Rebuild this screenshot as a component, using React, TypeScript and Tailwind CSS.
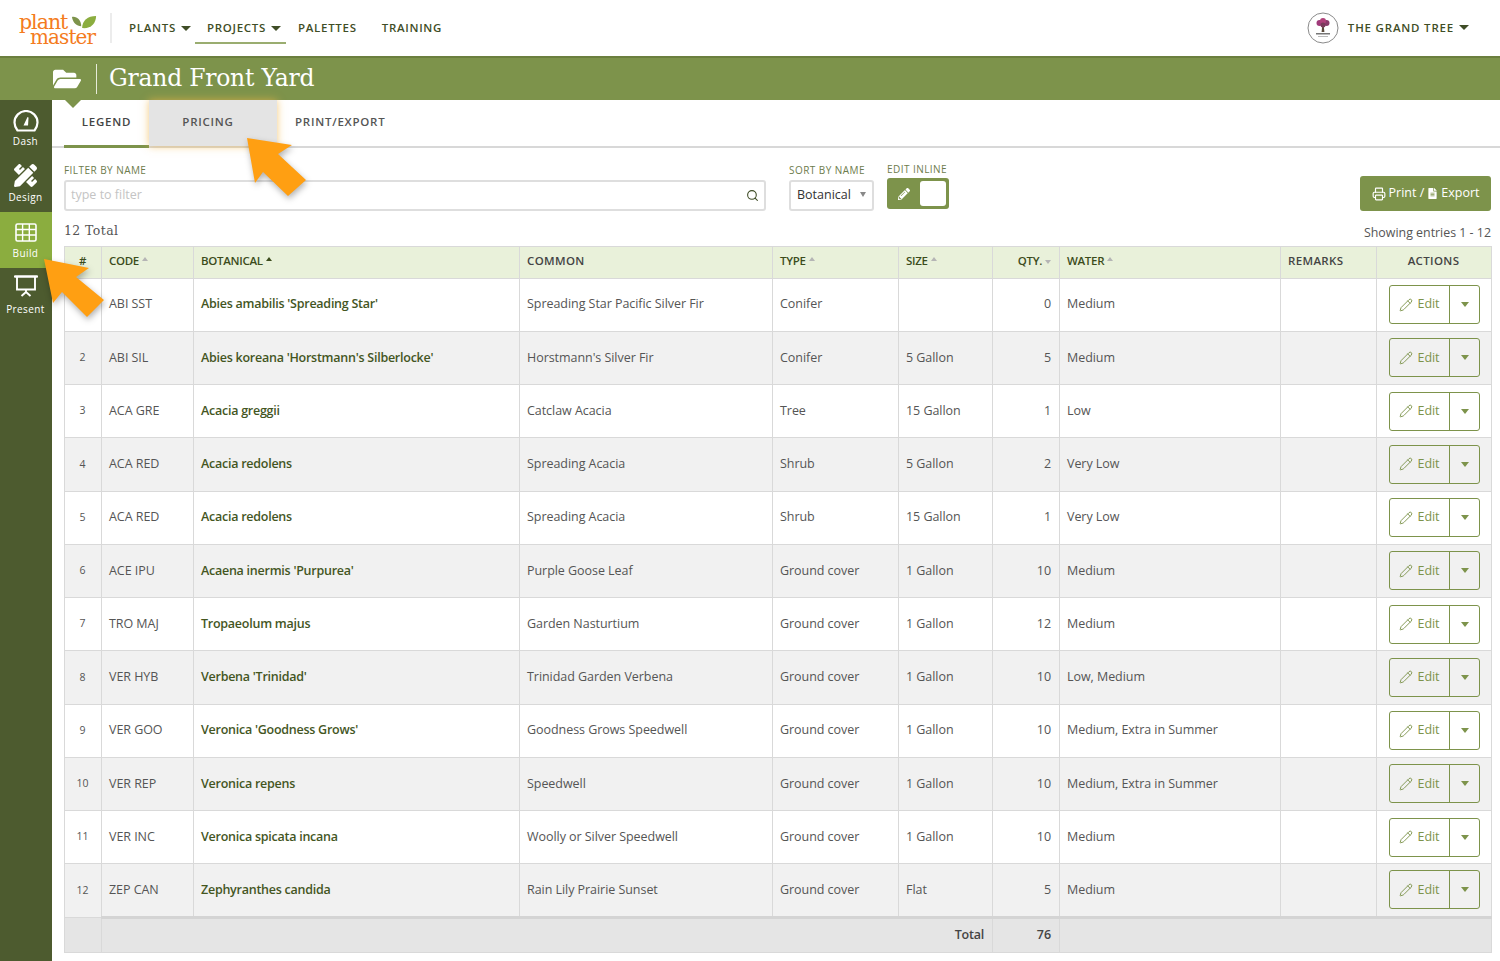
import React from 'react';
import { Search, Pencil, Printer } from 'lucide-react';
import { FaFolderOpen, FaPencilAlt, FaPencilRuler, FaFileAlt } from 'react-icons/fa';

type Row = { code: string; botanical: string; common: string; type: string; size: string; qty: number; water: string };

const rows: Row[] = [
  { code: 'ABI SST', botanical: "Abies amabilis 'Spreading Star'", common: 'Spreading Star Pacific Silver Fir', type: 'Conifer', size: '', qty: 0, water: 'Medium' },
  { code: 'ABI SIL', botanical: "Abies koreana 'Horstmann's Silberlocke'", common: "Horstmann's Silver Fir", type: 'Conifer', size: '5 Gallon', qty: 5, water: 'Medium' },
  { code: 'ACA GRE', botanical: 'Acacia greggii', common: 'Catclaw Acacia', type: 'Tree', size: '15 Gallon', qty: 1, water: 'Low' },
  { code: 'ACA RED', botanical: 'Acacia redolens', common: 'Spreading Acacia', type: 'Shrub', size: '5 Gallon', qty: 2, water: 'Very Low' },
  { code: 'ACA RED', botanical: 'Acacia redolens', common: 'Spreading Acacia', type: 'Shrub', size: '15 Gallon', qty: 1, water: 'Very Low' },
  { code: 'ACE IPU', botanical: "Acaena inermis 'Purpurea'", common: 'Purple Goose Leaf', type: 'Ground cover', size: '1 Gallon', qty: 10, water: 'Medium' },
  { code: 'TRO MAJ', botanical: 'Tropaeolum majus', common: 'Garden Nasturtium', type: 'Ground cover', size: '1 Gallon', qty: 12, water: 'Medium' },
  { code: 'VER HYB', botanical: "Verbena 'Trinidad'", common: 'Trinidad Garden Verbena', type: 'Ground cover', size: '1 Gallon', qty: 10, water: 'Low, Medium' },
  { code: 'VER GOO', botanical: "Veronica 'Goodness Grows'", common: 'Goodness Grows Speedwell', type: 'Ground cover', size: '1 Gallon', qty: 10, water: 'Medium, Extra in Summer' },
  { code: 'VER REP', botanical: 'Veronica repens', common: 'Speedwell', type: 'Ground cover', size: '1 Gallon', qty: 10, water: 'Medium, Extra in Summer' },
  { code: 'VER INC', botanical: 'Veronica spicata incana', common: 'Woolly or Silver Speedwell', type: 'Ground cover', size: '1 Gallon', qty: 10, water: 'Medium' },
  { code: 'ZEP CAN', botanical: 'Zephyranthes candida', common: 'Rain Lily Prairie Sunset', type: 'Ground cover', size: 'Flat', qty: 5, water: 'Medium' },
];

const Caret = ({ className = '' }: { className?: string }) => (
  <span className={`inline-block w-0 h-0 border-x-[5px] border-x-transparent border-t-[5px] border-t-[#3f4d26] ${className}`} />
);

const SortUp = ({ dark = false }: { dark?: boolean }) => (
  <span className={`inline-block align-[4px] ml-[3px] w-0 h-0 border-x-[3.5px] border-x-transparent border-b-[4px] ${dark ? 'border-b-[#3c4c1c]' : 'border-b-[#b5b5b5]'}`} />
);

const DashIcon = () => (
  <svg width="26" height="22" viewBox="0 0 26 22" fill="none" className="translate-y-[2px]">
    <path d="M4.5 20.5 H21.5 Q24.5 16.5 24.5 12.5 A 11.5 11.5 0 0 0 1.5 12.5 Q1.5 16.5 4.5 20.5 Z" stroke="white" strokeWidth="2.2" strokeLinejoin="round" />
    <path d="M10.5 15.5 L14.5 7 L15.5 7.5 L15 15.5 Z" fill="white" />
  </svg>
);

const BuildIcon = () => (
  <svg width="22" height="19" viewBox="0 0 22 19" fill="none" className="translate-y-[1px]">
    <rect x="1" y="1" width="20" height="17" rx="1.5" stroke="white" strokeWidth="1.6" />
    <path d="M1 6.5H21M1 12H21M7.6 1V18M14.3 1V18" stroke="white" strokeWidth="1.4" />
  </svg>
);

const PresentIcon = () => (
  <svg width="24" height="22" viewBox="0 0 24 22" fill="none" stroke="white" className="-translate-y-[1px]">
    <path d="M1 1.5H23" strokeWidth="2.4" strokeLinecap="round" />
    <path d="M3 2V14.5H21V2" strokeWidth="1.9" />
    <path d="M12 14.5V18M12 17L7.5 21M12 17L16.5 21" strokeWidth="1.9" />
  </svg>
);

const SideItem = ({ label, icon, active }: { label: string; icon: React.ReactNode; active?: boolean }) => (
  <div className={`h-14 flex flex-col items-center justify-end pr-[1px] pb-[9px] gap-[5px] ${active ? 'bg-[#8bad3f]' : ''}`}>
    <div className="h-[24px] flex items-center justify-center">{icon}</div>
    <div className="text-[10px] leading-[11px] tracking-[0.4px] text-white">{label}</div>
  </div>
);

// sortable headers are set tighter and darker than the plain ones
const Th = ({ children, className = '', plain }: { children: React.ReactNode; className?: string; plain?: boolean }) => (
  <th className={`border border-[#d9d9d9] pl-[7px] pr-2 pb-[4px] font-semibold ${plain ? 'text-[11.5px] text-[#444] tracking-[0.35px]' : 'text-[11.5px] text-[#3c4c1c] tracking-[-0.3px]'} ${className}`}>{children}</th>
);

const Td = ({ children, className = '' }: { children?: React.ReactNode; className?: string }) => (
  <td className={`border border-[#d9d9d9] pl-[7px] pr-2 ${className}`}>{children}</td>
);

const Arrow = ({ className, points }: { className: string; points: string }) => (
  <svg className={`absolute top-0 left-0 pointer-events-none ${className}`} width="1500" height="961">
    <polygon points={points} fill="#ff9f12" />
  </svg>
);

export default function App() {
  return (
    <div className="relative w-[1500px] h-[961px] overflow-hidden bg-white font-['Open_Sans',sans-serif] text-[#555]">
      {/* top nav */}
      <header className="h-14 flex items-center pl-[19px] pr-[31px]">
        <div className="w-[78px] h-[34px] relative font-['DejaVu_Serif',serif] text-[#f47b20] -translate-y-[1px]">
          <div className="absolute left-0 top-[5px] text-[20.5px] leading-[15px] tracking-[-1px]">plant</div>
          <div className="absolute left-[11px] top-[20px] text-[20px] leading-[15px] tracking-[-0.9px]">master</div>
          <svg className="absolute left-[52px] top-[5px]" width="26" height="15" viewBox="0 0 28 16">
            <path d="M1 2 C6 1 11 5 11 12 C6 12 2 8 1 2 Z" fill="#7d934b" />
            <path d="M12 14 C12 6 18 1 27 1 C27 9 21 15 12 14 Z" fill="#8bad3f" />
          </svg>
        </div>
        <div className="ml-[13px] w-[2px] h-[30px] bg-[#ececec]" />
        <nav className="flex items-center text-[11.5px] tracking-[0.7px] text-[#3f4d26] font-semibold h-[30px]">
          <div className="ml-[17px] w-[66px] flex items-center gap-[5px]">PLANTS <Caret /></div>
          <div className="h-[30px] w-[91px] flex items-center gap-[5px] pl-[12px] border-b-2 border-[#9aad70] translate-y-[1px]">PROJECTS <Caret /></div>
          <div className="ml-[12px]">PALETTES</div>
          <div className="ml-[25px]">TRAINING</div>
        </nav>
        <div className="ml-auto flex items-center text-[11.5px] tracking-[0.8px] text-[#3f4d26] font-semibold">
          <svg width="32" height="32" viewBox="0 0 32 32">
            <circle cx="16" cy="16" r="15" fill="white" stroke="#8a8a8a" strokeWidth="1" />
            <path d="M15.2 14h1.6l.6 6h-2.8z" fill="#5a4a3a" />
            <circle cx="12.5" cy="11" r="3" fill="#a03a7a" />
            <circle cx="19.5" cy="11" r="3" fill="#8a3a6a" />
            <circle cx="16" cy="9" r="3" fill="#b0407a" />
            <circle cx="16" cy="13" r="2.5" fill="#7a3a5a" />
            <rect x="9" y="21" width="14" height="1.5" fill="#777" />
            <rect x="11" y="24" width="10" height="1" fill="#bbb" />
          </svg>
          <span className="ml-[9px]">THE GRAND TREE</span>
          <Caret className="ml-[5px] -translate-y-[1px]" />
        </div>
      </header>

      {/* title bar */}
      <div className="h-[44px] bg-[#7d934b] border-t-2 border-[#6b7f3e] flex items-center pl-[53px]">
        <FaFolderOpen size={28} color="white" />
        <div className="ml-[15px] w-px h-[30px] bg-[#e6ebd9]" />
        <h1 className="ml-[12px] font-['DejaVu_Serif',serif] text-[23.5px] leading-none text-white tracking-[-0.25px]">Grand Front Yard</h1>
      </div>

      <div className="flex h-[861px]">
        {/* sidebar */}
        <aside className="w-[52px] shrink-0 bg-[#4d5b2f] flex flex-col">
          <SideItem label="Dash" icon={<DashIcon />} />
          <SideItem label="Design" icon={<FaPencilRuler size={23} color="white" />} />
          <SideItem label="Build" active icon={<BuildIcon />} />
          <SideItem label="Present" icon={<PresentIcon />} />
        </aside>

        <main className="flex-1 min-w-0 pl-3 pr-[9px] relative">
          <span className="absolute left-[13px] top-0 w-0 h-0 border-x-[8px] border-x-transparent border-t-[8px] border-t-[#7d934b]" />
          {/* tabs */}
          <div className="h-[48px] flex border-b-2 border-[#d8d8d8] -mr-[9px] -ml-3 pl-3 text-[11.5px] tracking-[0.75px] font-semibold text-[#555]">
            <div className="w-[85px] h-[48px] border-b-[3px] border-[#7d934b] flex items-center justify-center pb-[2px] text-[#444]">LEGEND</div>
            <div className="w-[128px] h-[46px] bg-[#e4e4e4] flex items-center justify-center pr-[10px] pb-[2px] shadow-[0_0_8px_rgba(240,180,70,0.7)]">PRICING</div>
            <div className="ml-[18px] flex items-center pb-[2px]">PRINT/EXPORT</div>
          </div>

          {/* filters */}
          <div className="flex items-end h-[63px] text-[10px] tracking-[0.45px] text-[#6d7c4c]">
            <div className="w-[702px]">
              <div className="leading-[12px] mb-[4px]">FILTER BY NAME</div>
              <div className="h-[31px] border-2 border-[#dedede] rounded-[3px] flex items-center justify-between pl-[5px] pr-[5px] text-[12.5px] tracking-normal text-[#c4c4c4]">
                type to filter
                <Search size={13} color="#3f4d26" />
              </div>
            </div>
            <div className="ml-[23px] w-[85px]">
              <div className="leading-[12px] mb-[4px] whitespace-nowrap">SORT BY NAME</div>
              <div className="h-[31px] border-2 border-[#dedede] rounded-[3px] flex items-center justify-between pl-[6px] pr-[6px] text-[12.5px] tracking-normal text-[#333]">
                Botanical
                <span className="w-0 h-0 border-x-[3.5px] border-x-transparent border-t-[5px] border-t-[#888] -translate-y-[1px]" />
              </div>
            </div>
            <div className="ml-[13px] w-[62px] mb-[2px]">
              <div className="leading-[12px] mb-[3px] whitespace-nowrap">EDIT INLINE</div>
              <div className="h-[31px] bg-[#7d934b] rounded-[3px] flex items-center pl-[11px] pr-[3px]">
                <FaPencilAlt size={12} color="white" />
                <div className="ml-auto w-[26px] h-[25px] bg-white rounded-[3px]" />
              </div>
            </div>
            <button className="ml-auto w-[131px] h-[35px] bg-[#7d934b] rounded-[3px] text-white text-[12.5px] tracking-normal flex items-center justify-center gap-[3px]">
              <Printer size={14} /> Print / <FaFileAlt size={11} /> Export
            </button>
          </div>

          {/* summary */}
          <div className="h-[35px] flex items-center justify-between">
            <div className="font-['DejaVu_Serif',serif] text-[12.5px] tracking-[0.4px] text-[#555] pt-[6px]">12 Total</div>
            <div className="text-[12.4px] text-[#555] pt-[9px]">Showing entries 1 - 12</div>
          </div>

          {/* legend table */}
          <table className="w-[1427px] table-fixed border-collapse text-[12.5px] tracking-[-0.05px]">
            <colgroup>
              <col className="w-[37px]" />
              <col className="w-[92px]" />
              <col className="w-[326px]" />
              <col className="w-[253px]" />
              <col className="w-[126px]" />
              <col className="w-[94px]" />
              <col className="w-[67px]" />
              <col className="w-[221px]" />
              <col className="w-[96px]" />
              <col className="w-[115px]" />
            </colgroup>
            <thead>
              <tr className="h-[31.5px] bg-[#e9f1da]">
                <Th className="text-center">#</Th>
                <Th className="text-left">CODE<SortUp /></Th>
                <Th className="text-left">BOTANICAL<SortUp dark /></Th>
                <Th plain className="text-left">COMMON</Th>
                <Th className="text-left">TYPE<SortUp /></Th>
                <Th className="text-left">SIZE<SortUp /></Th>
                <Th className="text-right whitespace-nowrap">QTY.<span className="inline-block align-[1px] ml-[3px] w-0 h-0 border-x-[3.5px] border-x-transparent border-t-[4px] border-t-[#b5b5b5]" /></Th>
                <Th className="text-left">WATER<SortUp /></Th>
                <Th plain className="text-left">REMARKS</Th>
                <Th plain className="text-center">ACTIONS</Th>
              </tr>
            </thead>
            <tbody>
              {rows.map((r, i) => (
                <tr key={i} className={`h-[53.25px] ${i % 2 ? 'bg-[#f1f1f1]' : 'bg-white'}`}>
                  <Td className="text-center text-[10.5px]">{i + 1}</Td>
                  <Td>{r.code}</Td>
                  <Td className="font-semibold tracking-[-0.25px] text-[#44561f] whitespace-nowrap">{r.botanical}</Td>
                  <Td>{r.common}</Td>
                  <Td>{r.type}</Td>
                  <Td>{r.size}</Td>
                  <Td className="text-right">{r.qty}</Td>
                  <Td>{r.water}</Td>
                  <Td />
                  <Td>
                    <div className="ml-[5px] w-[91px] h-[39px] flex border-[1.5px] border-[#7d934b] rounded-[3px] text-[#7d934b]">
                      <div className="w-[60px] flex items-center justify-center gap-[4px] border-r-[1.5px] border-[#7d934b]">
                        <Pencil size={14} strokeWidth={1.6} /> Edit
                      </div>
                      <div className="flex-1 flex items-center justify-center">
                        <span className="w-0 h-0 border-x-[4.5px] border-x-transparent border-t-[5px] border-t-[#7d934b]" />
                      </div>
                    </div>
                  </Td>
                </tr>
              ))}
              <tr className="h-[35px] bg-[#e5e5e5]">
                <Td />
                <td colSpan={5} className="border border-[#d9d9d9] border-t-[3px] border-t-[#d4d4d4] px-2 text-right font-semibold tracking-[-0.2px] text-[#444]">Total</td>
                <td className="border border-[#d9d9d9] border-t-[3px] border-t-[#d4d4d4] px-2 text-right font-semibold text-[#444]">76</td>
                <td colSpan={3} className="border border-[#d9d9d9] border-t-[3px] border-t-[#d4d4d4]" />
              </tr>
            </tbody>
          </table>
        </main>
      </div>

      {/* callout arrows */}
      <Arrow className="drop-shadow-[1px_3px_3px_rgba(0,0,0,0.3)]" points="247,138 292,145 278,154 306,180 288,196 263,172 255,183" />
      <Arrow className="drop-shadow-[1px_3px_3px_rgba(0,0,0,0.3)]" points="44,259 89,268 76,277 104,300 87,317 62,292 53,303" />
    </div>
  );
}
